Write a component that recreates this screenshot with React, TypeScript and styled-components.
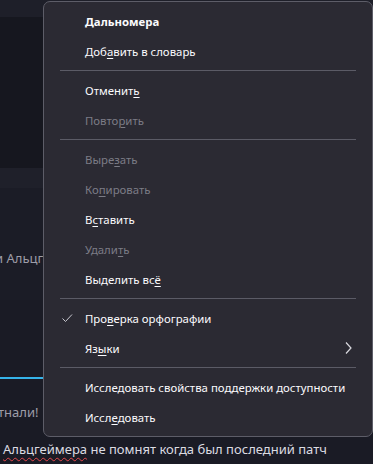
import styled, { createGlobalStyle } from 'styled-components';

const GlobalStyle = createGlobalStyle`
	html, body {
		margin: 0;
		padding: 0;
		background: #1a1b25;
		overflow: hidden;
	}
	#root {
		width: 373px;
		height: 464px;
	}
`;

const Page = styled.div`
	position: relative;
	width: 373px;
	height: 464px;
	display: flex;
	flex-direction: column;
	overflow: hidden;
	font-family: 'Noto Sans', 'Open Sans', sans-serif;
`;

const Band = styled.div<{ $h: number; $bg: string; $top?: number }>`
	height: ${(p) => p.$h}px;
	box-sizing: border-box;
	flex-shrink: 0;
	background: ${(p) => p.$bg};
	padding-top: ${(p) => p.$top ?? 0}px;
	overflow: hidden;
`;

const GhostText = styled.div<{ $shift: number }>`
	margin-left: ${(p) => p.$shift}px;
	color: #9d9da8;
	font-size: 13px;
	line-height: 18px;
	white-space: nowrap;
`;

const AccentLine = styled.div`
	height: 2px;
	flex-shrink: 0;
	background: #35b3e9;
`;

const ChatLine = styled.div`
	flex: 1;
	display: flex;
	align-items: center;
	padding-left: 3px;
	padding-bottom: 3px;
	color: #dcdce2;
	font-size: 13px;
	white-space: nowrap;
`;

const Misspelled = styled.span`
	text-decoration: underline wavy #e5484d;
	text-decoration-thickness: 1px;
	text-underline-offset: 3px;
`;

const Menu = styled.div`
	position: absolute;
	z-index: 10;
	left: 43px;
	top: 1px;
	width: 330px;
	box-sizing: border-box;
	padding: 4px 0;
	background: #2b2a33;
	border: 1px solid #5d5d68;
	border-radius: 7px;
	font-family: 'Noto Sans', 'Open Sans', sans-serif;
	font-size: 11.4px;
	color: #fbfbfe;
`;

const Item = styled.div<{ $disabled?: boolean; $bold?: boolean }>`
	position: relative;
	height: 30px;
	display: flex;
	align-items: center;
	padding-left: 41px;
	padding-right: 16px;
	color: ${(p) => (p.$disabled ? '#7c7c86' : '#fbfbfe')};
	font-weight: ${(p) => (p.$bold ? 700 : 400)};
	white-space: nowrap;
`;

const Key = styled.span`
	text-decoration: underline;
	text-decoration-thickness: 1px;
	text-underline-offset: 2px;
`;

const Separator = styled.div`
	height: 1px;
	margin: 4px 16px;
	background: #5b5b66;
`;

const CheckMark = styled.svg`
	position: absolute;
	left: 17px;
	top: 9px;
`;

const Chevron = styled.svg`
	margin-left: auto;
	margin-right: 3px;
`;

const Check = () => (
	<CheckMark width="12" height="12" viewBox="0 0 12 12">
		<polyline points="1.5,6.5 4.5,9.5 11,2.5" fill="none" stroke="#c8c8d0" strokeWidth="1" />
	</CheckMark>
);

const Arrow = () => (
	<Chevron width="10" height="14" viewBox="0 0 10 14">
		<polyline points="3,1.5 8,7 3,12.5" fill="none" stroke="#d8d8de" strokeWidth="1.2" />
	</Chevron>
);

const App = () => {
	return (
		<>
			<GlobalStyle />
			<Page>
				<Band $h={17} $bg="#1e1f29" />
				<Band $h={151} $bg="#16171f" />
				<Band $h={20} $bg="#1f202a" />
				<Band $h={112} $bg="#1b1c26" $top={61}>
					<GhostText $shift={-5}>и Альцгеймера</GhostText>
				</Band>
				<Band $h={77} $bg="#1a1b25" />
				<AccentLine />
				<Band $h={58} $bg="#1a1b25" $top={24}>
					<GhostText $shift={-2}>тнали!</GhostText>
				</Band>
				<ChatLine>
					<Misspelled>Альцгеймера</Misspelled>&nbsp;не помнят когда был последний патч
				</ChatLine>

				<Menu>
					<Item $bold>Дальномера</Item>
					<Item>
						Доб<Key>а</Key>вить в словарь
					</Item>
					<Separator />
					<Item>
						Отменит<Key>ь</Key>
					</Item>
					<Item $disabled>
						Повто<Key>р</Key>ить
					</Item>
					<Separator />
					<Item $disabled>
						Выре<Key>з</Key>ать
					</Item>
					<Item $disabled>
						Ко<Key>п</Key>ировать
					</Item>
					<Item>
						В<Key>с</Key>тавить
					</Item>
					<Item $disabled>
						Удали<Key>т</Key>ь
					</Item>
					<Item>
						Выделить вс<Key>ё</Key>
					</Item>
					<Separator />
					<Item>
						<Check />
						Про<Key>в</Key>ерка орфографии
					</Item>
					<Item>
						Яз<Key>ы</Key>ки
						<Arrow />
					</Item>
					<Separator />
					<Item>Исследовать свойства поддержки доступности</Item>
					<Item>
						Иссл<Key>е</Key>довать
					</Item>
				</Menu>
			</Page>
		</>
	);
};

export default App;
